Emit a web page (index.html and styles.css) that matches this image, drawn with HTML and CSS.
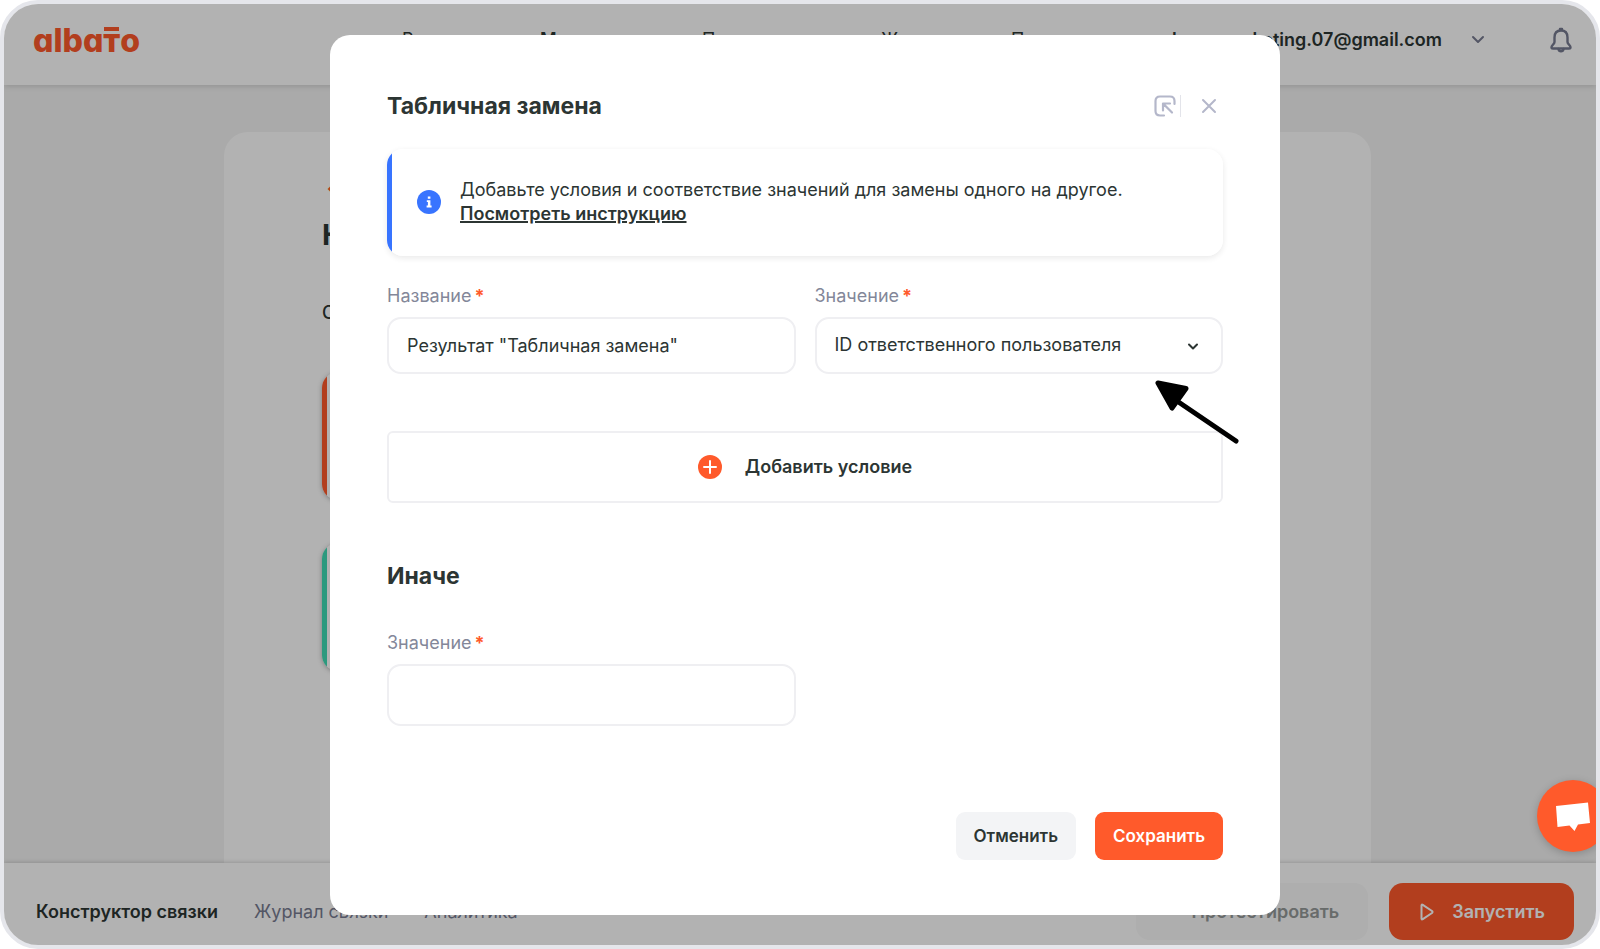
FILE: index.html
```html
<!DOCTYPE html>
<html lang="ru">
<head>
<meta charset="utf-8">
<meta name="viewport" content="width=device-width, initial-scale=1">
<title>Albato — Табличная замена</title>
<link rel="stylesheet" href="styles.css">
</head>
<body>
<div class="app">
  <header class="header">
    <a class="logo" href="#" aria-label="albato">alba<span class="logo-t">т</span>o</a>
    <nav class="nav">
      <a href="#">Решения</a>
      <a class="current" href="#">Мои связки</a>
      <a href="#">Приложения</a>
      <a href="#">Журнал</a>
      <a href="#">Помощь</a>
    </nav>
    <button class="account" type="button">
      <span>elenasmarketing.07@gmail.com</span>
      <svg width="14" height="10" viewBox="0 0 14 10" fill="none" stroke="currentColor" stroke-width="2" stroke-linecap="round" stroke-linejoin="round"><path d="M2 2l5 5 5-5"/></svg>
    </button>
    <button class="bell" type="button" aria-label="Уведомления">
      <svg width="22" height="26" viewBox="0 0 22 26" fill="none" stroke="currentColor" stroke-width="2.400" stroke-linejoin="round" stroke-linecap="round"><path d="M11 3.500C6.500 3.500 4.500 6.500 4.500 10.500V15C4.500 17 1.500 18.500 1.500 20.200C1.500 21.200 2.200 21.500 3 21.500H19C19.800 21.500 20.500 21.200 20.500 20.200C20.500 18.500 17.500 17 17.500 15V10.500C17.500 6.500 15.500 3.500 11 3.500Z"/><path d="M10 3V2h2v1M8.500 22c.5 3 4.500 3 5 0"/></svg>
    </button>
  </header>

  <main class="main">
    <section class="sheet">
      <a class="back" href="#">←&nbsp;Назад</a>
      <h1 class="sheet-title">Конструктор</h1>
      <p class="sheet-text">Связка</p>
      <div class="step step-orange"></div>
      <div class="step step-green"></div>
    </section>
  </main>

  <footer class="footer">
    <nav class="tabs">
      <a class="active" href="#">Конструктор связки</a>
      <a href="#">Журнал связки</a>
      <a href="#">Аналитика</a>
    </nav>
    <button class="btn-large btn-test" type="button">Протестировать</button>
    <button class="btn-large btn-run" type="button">
      <svg width="14" height="18" viewBox="0 0 14 18" fill="none" stroke="currentColor" stroke-width="2" stroke-linejoin="round"><path d="M1.500 2.500Q1.500 1 2.800 1.800L12 8Q13 9 12 10L2.800 16.200Q1.500 17 1.500 15.500Z"/></svg>
      Запустить
    </button>
  </footer>

  <div class="overlay">
    <form class="modal" role="dialog" aria-labelledby="modal-title">
      <div class="modal-head">
        <h2 id="modal-title">Табличная замена</h2>
        <button class="icon-btn expand" type="button" aria-label="Открыть">
          <svg width="22" height="22" viewBox="0 0 22 22" fill="none" stroke="currentColor" stroke-width="2.200" stroke-linecap="round" stroke-linejoin="round"><path d="M10 20.500H6C3 20.500 1.500 19 1.500 16V6C1.500 3 3 1.500 6 1.500H16C19 1.500 20.500 3 20.500 6V9"/><path d="M9 15.500V8.500H16M9.500 9L18 17.500"/></svg>
        </button>
        <button class="icon-btn close" type="button" aria-label="Закрыть">
          <svg width="16" height="16" viewBox="0 0 16 16" fill="none" stroke="currentColor" stroke-width="2" stroke-linecap="round"><path d="M2 2l12 12M14 2L2 14"/></svg>
        </button>
      </div>

      <div class="notice">
        <svg class="notice-icon" width="24" height="24" viewBox="0 0 24 24"><circle cx="12" cy="12" r="12" fill="#3874ff"/><path fill="#fff" d="M10.800 6.500h2.600v2.300h-2.600zM9.800 10.200h3.600v5.400h1.200v1.800H9.600v-1.800h1.300v-3.600H9.800z"/></svg>
        <p>Добавьте условия и соответствие значений для замены одного на другое.<br><a href="#">Посмотреть инструкцию</a></p>
      </div>

      <div class="fields">
        <div class="field">
          <label for="name">Название<b>*</b></label>
          <input class="control" id="name" type="text" value="Результат &quot;Табличная замена&quot;">
        </div>
        <div class="field">
          <label for="value">Значение<b>*</b></label>
          <div class="select-wrap">
            <select class="control" id="value"><option>ID ответственного пользователя</option></select>
            <svg class="chevron" width="12" height="8" viewBox="0 0 12 8" fill="none" stroke="currentColor" stroke-width="2" stroke-linecap="round" stroke-linejoin="round"><path d="M2 1.500l4 4 4-4"/></svg>
            <svg class="pointer" width="86" height="68" viewBox="0 0 86 68" stroke="#000" stroke-linecap="round" stroke-linejoin="round"><path d="M22 22L81 62" stroke-width="5" fill="none"/><path d="M3 4L31 9.500L17 29Z" stroke-width="5"/></svg>
          </div>
        </div>
      </div>

      <button class="add" type="button">
        <svg width="24" height="24" viewBox="0 0 24 24"><circle cx="12" cy="12" r="12" fill="#ff5a2b"/><path d="M12 6v12M6 12h12" stroke="#fff" stroke-width="2" stroke-linecap="round"/></svg>
        Добавить условие
      </button>

      <h3 class="subtitle">Иначе</h3>
      <div class="fields">
        <div class="field">
          <label for="other">Значение<b>*</b></label>
          <input class="control tall" id="other" type="text">
        </div>
      </div>

      <div class="actions">
        <button class="btn btn-cancel" type="button">Отменить</button>
        <button class="btn btn-save" type="submit">Сохранить</button>
      </div>
    </form>
  </div>

  <button class="chat" type="button" aria-label="Чат">
    <svg width="36" height="32" viewBox="0 0 36 32" fill="#fff"><path d="M1 6L33 2.500L35 23L23 24.500L19.500 31L14.500 25.500L2.500 27Z"/></svg>
  </button>
</div>
</body>
</html>
```
FILE: styles.css
```css
* {
  box-sizing: border-box;
}

body {
  margin: 0;
  background: #fff;
  color: #2c3533;
  font: 18px/24px Inter, "Noto Sans", sans-serif;
}

h1, h2, h3, p {
  margin: 0;
}

a {
  color: inherit;
  text-decoration: none;
}

button {
  margin: 0;
  padding: 0;
  border: 0;
  background: none;
  color: inherit;
  font: inherit;
  cursor: pointer;
}

svg {
  display: block;
  flex: none;
}

.app {
  position: relative;
  display: flex;
  flex-direction: column;
  min-height: 100vh;
  overflow: hidden;
  border: 4px solid #e5e6eb;
  border-radius: 38px;
  background: #f4f4f4;
}

/* Header */
.header {
  display: flex;
  align-items: center;
  padding: 0 24px 9px 29px;
  background: #fff;
  box-shadow: 0 1px 6px rgba(0, 0, 0, 0.16);
}

.logo {
  width: 369px;
  padding-top: 2px;
  color: #ff5a2b;
  font-size: 32px;
  font-weight: 800;
  line-height: 70px;
  font-feature-settings: "cv11";
}

.logo-t {
  position: relative;
}

.logo-t::before {
  content: "";
  position: absolute;
  top: 6px;
  left: 1px;
  right: 1px;
  height: 4px;
  background: currentColor;
}

.nav {
  display: grid;
  grid-template-columns: 138px 162px 179px 130px auto;
  white-space: nowrap;
}

.nav .current {
  font-weight: 600;
}

.account {
  display: flex;
  align-items: center;
  gap: 29px;
  margin-left: auto;
  font-weight: 600;
}

.account svg,
.bell {
  color: #787c91;
}

.bell {
  margin-left: 65px;
}

/* Page behind the dialog */
.main {
  flex: 1;
  display: flex;
  padding: 47px 225px 0 220px;
}

.sheet {
  flex: 1;
  padding: 46px 97px 0 98px;
  border-radius: 24px 24px 0 0;
  background: #fff;
}

.back {
  padding-left: 4px;
  color: #ff5a2b;
  font-weight: 700;
}

.sheet-title {
  margin-top: 17px;
  font-size: 29px;
  line-height: 32px;
}

.sheet-text {
  margin: 50px 0 47px;
  font-weight: 500;
}

.step {
  height: 128px;
  margin-bottom: 43px;
  border-radius: 16px;
  box-shadow: 0 1px 5px rgba(0, 0, 0, 0.3);
}

.step-orange {
  background: linear-gradient(to right, #ff5a2b 5px, #fff 5px);
}

.step-green {
  background: linear-gradient(to right, #3fdcb5 5px, #fff 5px);
}

/* Footer */
.footer {
  position: relative;
  display: flex;
  align-items: center;
  gap: 21px;
  padding: 20px 22px 5px 32px;
  background: #fff;
  box-shadow: 0 -1px 4px rgba(0, 0, 0, 0.16);
}

.tabs {
  flex: 1;
  display: flex;
  gap: 36px;
  color: #787c91;
}

.tabs .active {
  color: #2c3533;
  font-weight: 600;
}

.btn-large {
  display: flex;
  align-items: center;
  height: 57px;
  border-radius: 14px;
  font-weight: 600;
}

.btn-test {
  padding: 0 29px 0 56px;
  background: #f9f9f9;
  color: #959a99;
}

.btn-run {
  gap: 18px;
  padding: 0 29px 0 31px;
  background: #ff5a2b;
  color: #fff;
}

/* Dialog */
.overlay {
  position: absolute;
  inset: 0;
  display: grid;
  place-items: center;
  padding-left: 10px;
  background: rgba(0, 0, 0, 0.3);
}

.modal {
  width: 950px;
  max-width: 100%;
  padding: 55px 57px;
  border-radius: 20px;
  background: #fff;
}

.modal-head {
  display: flex;
  align-items: center;
  margin-bottom: 27px;
}

.modal-head h2 {
  flex: 1;
}

.modal-head h2,
.subtitle {
  font-size: 23px;
  font-weight: 700;
  line-height: 32px;
}

.icon-btn {
  color: #b4b7ca;
}

.expand {
  padding-right: 4px;
  border-right: 1px solid #e3e4ea;
}

.close {
  margin: 0 6px 0 20px;
}

.notice {
  display: flex;
  align-items: center;
  gap: 19px;
  min-height: 107px;
  padding: 0 30px;
  border-radius: 16px;
  background: linear-gradient(to right, #3874ff 5px, #fff 5px);
  box-shadow: 0 2px 6px rgba(0, 0, 0, 0.09);
}

.notice a {
  font-weight: 600;
  text-decoration: underline;
  text-decoration-thickness: 2px;
}

.fields {
  display: grid;
  grid-template-columns: 1fr 1fr;
  gap: 19px;
}

.notice + .fields {
  margin: 28px 0 57px;
}

.field label {
  display: block;
  margin-bottom: 9px;
  color: #838799;
}

.field b {
  margin-left: 3px;
  color: #ff5a2b;
  font-weight: 700;
}

.control {
  display: block;
  width: 100%;
  height: 57px;
  padding: 0 18px;
  border: 2px solid #efeff2;
  border-radius: 14px;
  background: #fff;
  color: inherit;
  font: inherit;
  appearance: none;
}

.tall {
  height: 62px;
}

.select-wrap {
  position: relative;
}

.chevron {
  position: absolute;
  top: 26px;
  right: 24px;
  pointer-events: none;
}

.pointer {
  position: absolute;
  top: 62px;
  right: -18px;
  z-index: 1;
  pointer-events: none;
}

.add {
  display: flex;
  align-items: center;
  justify-content: center;
  gap: 23px;
  width: 100%;
  height: 72px;
  border: 2px solid #efeff2;
  border-radius: 6px;
  font-weight: 600;
}

.subtitle {
  margin: 57px 0 39px;
}

.actions {
  display: flex;
  justify-content: flex-end;
  gap: 19px;
  margin-top: 86px;
}

.btn {
  height: 48px;
  padding: 0 18px;
  border-radius: 9px;
  font-size: 17px;
  font-weight: 600;
}

.btn-cancel {
  background: #f3f4f6;
}

.btn-save {
  background: #ff5a2b;
  color: #fff;
}

.chat {
  position: absolute;
  right: -13px;
  bottom: 93px;
  display: grid;
  place-items: center;
  width: 72px;
  height: 72px;
  border-radius: 50%;
  background: #ff5a2b;
  box-shadow: 0 2px 8px rgba(0, 0, 0, 0.2);
}
```
